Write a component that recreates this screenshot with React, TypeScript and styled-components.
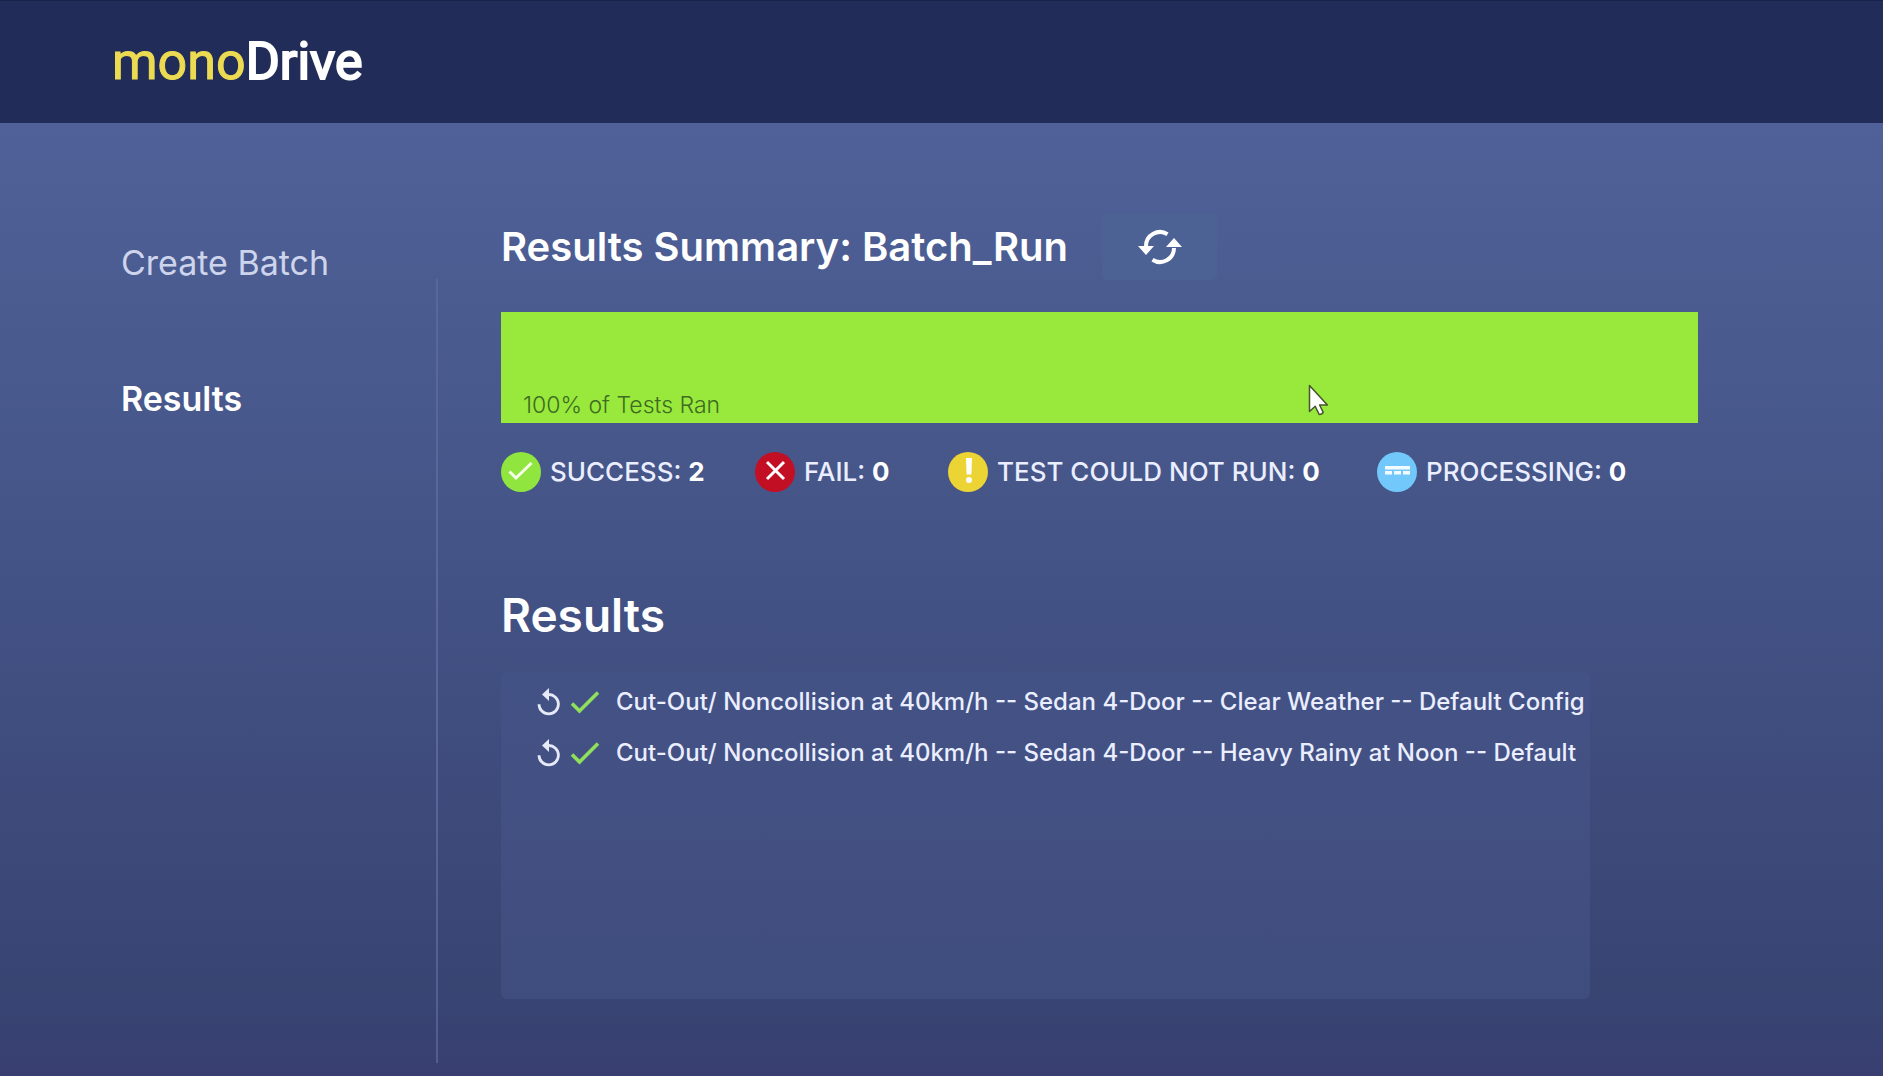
import React from "react";
import styled, { createGlobalStyle } from "styled-components";

const GlobalStyle = createGlobalStyle`
  * { box-sizing: border-box; }
  body {
    margin: 0;
    background: #384070;
    color: #ffffff;
    font-family: Inter, "Liberation Sans", sans-serif;
  }
  h1, h2, p, ul { margin: 0; padding: 0; }
  ul { list-style: none; }
  button { font: inherit; color: inherit; border: 0; padding: 0; cursor: pointer; }
`;

const Page = styled.div`
  min-height: 100vh;
  display: flex;
  flex-direction: column;
  background: linear-gradient(180deg, #4f6198 122px, #465689 45%, #404e80 64%, #384573 92%, #383f70 100%);
`;

const Header = styled.header`
  height: 123px;
  padding: 0 112px;
  display: flex;
  align-items: center;
  background: #212d58;
  border-top: 1px solid #18234a;
`;

const Logo = styled.a`
  font-family: Roboto, sans-serif;
  font-size: 52px;
  line-height: 56px;
  color: #ffffff;
  text-decoration: none;
  -webkit-text-stroke: 2px currentColor;
`;

const LogoAccent = styled.span`
  color: #ecdb52;
  -webkit-text-stroke: 1px currentColor;
`;

const Body = styled.div`
  flex: 1;
  display: flex;
`;

const Sidebar = styled.nav`
  flex: 0 0 436px;
  display: flex;
  flex-direction: column;
  align-items: flex-start;
  gap: 96px;
  padding: 120px 0 0 121px;
`;

const NavLink = styled.a<{ $active?: boolean }>`
  font-size: 34px;
  line-height: 40px;
  font-weight: ${(p) => (p.$active ? 600 : 400)};
  color: ${(p) => (p.$active ? "#ffffff" : "#cdd4ec")};
  text-decoration: none;
`;

const Divider = styled.div`
  flex: 0 0 2px;
  margin: 156px 0 13px;
  background: linear-gradient(180deg, #5b6796, #5a659a 60%, #515c91);
`;

const Main = styled.main`
  flex: 1;
  min-width: 0;
  padding: 90px 185px 77px 63px;
  display: flex;
  flex-direction: column;
`;

const TitleRow = styled.div`
  display: flex;
  align-items: center;
  gap: 34px;
`;

const Title = styled.h1`
  font-size: 40px;
  line-height: 48px;
  font-weight: 600;
  white-space: nowrap;
`;

const RefreshButton = styled.button`
  width: 115px;
  height: 67px;
  display: grid;
  place-items: center;
  border-radius: 5px;
  background: #4c6194;
`;

const Bar = styled.div`
  position: relative;
  height: 111px;
  margin-top: 32px;
  padding: 0 22px 4px;
  display: flex;
  align-items: flex-end;
  background: #98e93c;
`;

const BarText = styled.p`
  font-size: 23px;
  line-height: 28px;
  font-weight: 300;
  color: #3f6b22;
`;

const Pointer = styled.svg`
  position: absolute;
  left: 67.4%;
  top: 72px;
`;

const Legend = styled.ul`
  margin-top: 29px;
  display: grid;
  grid-template-columns: 254px 193px 429px auto;
  justify-content: start;
`;

const LegendItem = styled.li`
  display: flex;
  align-items: center;
  gap: 9px;
  font-size: 26px;
  line-height: 40px;
  font-weight: 500;
  color: #eaeeff;
  white-space: nowrap;
`;

const Count = styled.strong`
  font-weight: 700;
  color: #ffffff;
`;

const SectionTitle = styled.h2`
  margin-top: 95px;
  font-size: 46px;
  line-height: 56px;
  font-weight: 600;
`;

const Panel = styled.ul`
  flex: 1;
  min-height: 200px;
  margin: 29px 108px 0 0;
  padding: 4px 0 0 35px;
  overflow: hidden;
  border-radius: 6px;
  background: linear-gradient(180deg, #435285, #424e80 70%, #3e4d7e);
`;

const Row = styled.li`
  height: 51px;
  display: flex;
  align-items: center;
`;

const ReplayButton = styled.button`
  flex: none;
  width: 26px;
  height: 30px;
  margin-right: 8px;
  display: grid;
  background: none;
`;

const RowText = styled.span`
  margin-left: 16px;
  font-size: 24px;
  line-height: 32px;
  font-weight: 500;
  color: #eaeeff;
  white-space: nowrap;
`;

const TickSmall = styled.svg`
  flex: none;
`;

const RefreshIcon = () => (
  <svg width="46" height="36" viewBox="0 0 46 36" aria-hidden="true">
    <g fill="none" stroke="#fff" strokeWidth="4">
      <path d="M30.5 5.2A14 14 0 0 0 9 17" />
      <path d="M15.5 30.8A14 14 0 0 0 37 19" />
    </g>
    <path d="M1 17h16l-8 9z" fill="#fff" />
    <path d="M45 18H29l8-9z" fill="#fff" />
  </svg>
);

const ReplayIcon = () => (
  <svg width="26" height="30" viewBox="0 0 26 30" aria-hidden="true">
    <path d="M12.5 7.500A9.700 9.700 0 1 1 3 17.200" fill="none" stroke="#e6e9f6" strokeWidth="2.800" />
    <path d="M13 1v13L6 7.500z" fill="#e6e9f6" />
  </svg>
);

const Tick = () => (
  <TickSmall width="30" height="26" viewBox="0 0 30 26" aria-hidden="true">
    <path d="M2 14.500l7.500 7.500L28 3.500" fill="none" stroke="#8fe05a" strokeWidth="3.600" />
  </TickSmall>
);

type Status = "success" | "fail" | "warning" | "processing";

const fills: Record<Status, string> = {
  success: "#90e53e",
  fail: "#c30f24",
  warning: "#ecd434",
  processing: "#72c8fa",
};

const StatusIcon = ({ status }: { status: Status }) => (
  <svg width="40" height="40" viewBox="0 0 40 40" aria-hidden="true">
    <circle cx="20" cy="20" r="20" fill={fills[status]} />
    {status === "success" && (
      <path d="M8.500 19.500l6.500 6.500L30.500 11" fill="none" stroke="#f6ffe9" strokeWidth="3" />
    )}
    {status === "fail" && (
      <path d="M12 10l17 17M29 10L12 27" fill="none" stroke="#fff" strokeWidth="3" />
    )}
    {status === "warning" && (
      <g fill="#fff">
        <path d="M18 6h6l-.6 16.500h-4.800z" />
        <circle cx="21" cy="28" r="3" />
      </g>
    )}
    {status === "processing" && (
      <path d="M8 14h25v3.500H8zM8 19h7v3.500H8zM17 19h7v3.500h-7zM26 19h7v3.500h-7z" fill="#f2fbff" />
    )}
  </svg>
);

const legend: { status: Status; label: string; count: number }[] = [
  { status: "success", label: "SUCCESS", count: 2 },
  { status: "fail", label: "FAIL", count: 0 },
  { status: "warning", label: "TEST COULD NOT RUN", count: 0 },
  { status: "processing", label: "PROCESSING", count: 0 },
];

const results = [
  "Cut-Out/ Noncollision at 40km/h -- Sedan 4-Door -- Clear Weather -- Default Config",
  "Cut-Out/ Noncollision at 40km/h -- Sedan 4-Door -- Heavy Rainy at Noon -- Default",
];

export default function App() {
  return (
    <Page>
      <GlobalStyle />
      <Header>
        <Logo href="#"><LogoAccent>mono</LogoAccent>Drive</Logo>
      </Header>
      <Body>
        <Sidebar>
          <NavLink href="#create">Create Batch</NavLink>
          <NavLink href="#results" $active aria-current="page">Results</NavLink>
        </Sidebar>
        <Divider />
        <Main>
          <TitleRow>
            <Title>Results Summary: Batch_Run</Title>
            <RefreshButton type="button" aria-label="Refresh results">
              <RefreshIcon />
            </RefreshButton>
          </TitleRow>
          <Bar>
            <BarText>100% of Tests Ran</BarText>
            <Pointer width="22" height="32" viewBox="0 0 22 32" aria-hidden="true">
              <path
                d="M1.500 1.500v26l5.700-5.200 4 8.200q3 0 4-2.200l-3.600-7.300h7.800z"
                fill="#fff" stroke="#46542f" strokeWidth="1.500" strokeLinejoin="round"
              />
            </Pointer>
          </Bar>
          <Legend>
            {legend.map((item) => (
              <LegendItem key={item.status}>
                <StatusIcon status={item.status} />
                <span>{item.label}: <Count>{item.count}</Count></span>
              </LegendItem>
            ))}
          </Legend>
          <SectionTitle>Results</SectionTitle>
          <Panel>
            {results.map((name) => (
              <Row key={name}>
                <ReplayButton type="button" aria-label="Run again"><ReplayIcon /></ReplayButton>
                <Tick />
                <RowText>{name}</RowText>
              </Row>
            ))}
          </Panel>
        </Main>
      </Body>
    </Page>
  );
}
